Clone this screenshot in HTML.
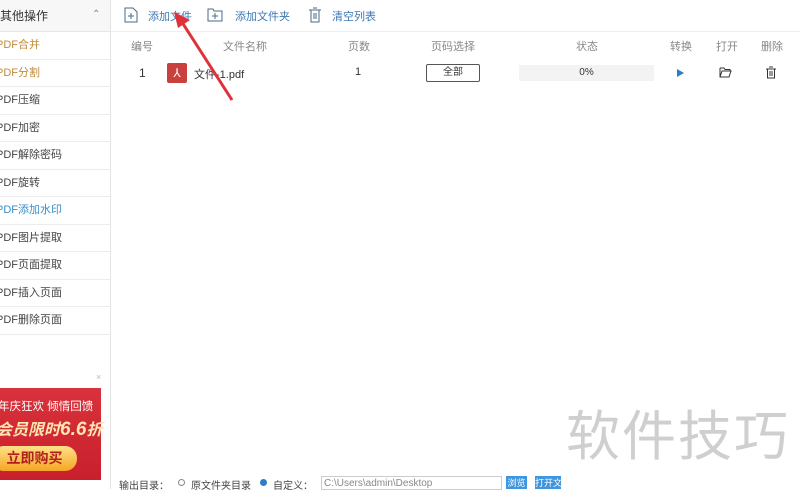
<!DOCTYPE html>
<html><head><meta charset="utf-8"><style>
*{margin:0;padding:0;box-sizing:border-box}
body{width:800px;height:489px;overflow:hidden;background:#fff;font-family:"Liberation Sans","Noto Sans CJK SC",sans-serif;font-size:11px;color:#333;position:relative}
.abs{position:absolute}
.side{left:0;top:0;width:111px;height:489px;border-right:1px solid #e4e4e4;background:#fff}
.sh{left:0;top:0;width:110px;height:32px;background:#f7f7f7;border-bottom:1px solid #e6e6e6;font-size:12px;line-height:32px;padding-left:0;color:#333}
.item{position:absolute;left:0;width:110px;height:27.5px;border-bottom:1px solid #ececec;line-height:27px;font-size:11px;color:#444;white-space:nowrap;overflow:hidden;text-indent:-4px}
.tb{top:0;left:111px;width:689px;height:32px;border-bottom:1px solid #eee}
.tbt{font-size:11px;color:#3a78b5;top:8px}
.hd{top:38px;font-size:11px;color:#888}
</style></head><body>
<div class="abs side"></div>
<div class="abs sh">其他操作<span style="position:absolute;left:92px;top:-1px;color:#888;font-size:10px">&#8963;</span></div>
<div class="item" style="top:32px;color:#c08a3a">PDF合并</div>
<div class="item" style="top:59.5px;color:#c08a3a">PDF分割</div>
<div class="item" style="top:87px">PDF压缩</div>
<div class="item" style="top:114.5px">PDF加密</div>
<div class="item" style="top:142px">PDF解除密码</div>
<div class="item" style="top:169.5px">PDF旋转</div>
<div class="item" style="top:197px;color:#3a8ec8">PDF添加水印</div>
<div class="item" style="top:224.5px">PDF图片提取</div>
<div class="item" style="top:252px">PDF页面提取</div>
<div class="item" style="top:279.5px">PDF插入页面</div>
<div class="item" style="top:307px">PDF删除页面</div>
<div class="abs" style="left:96px;top:372px;color:#bbb;font-size:9px">×</div>
<div class="abs" style="left:0;top:388px;width:101px;height:92px;background:linear-gradient(#d8323c,#c8202c)">
<div class="abs" style="left:-2px;top:10px;color:#fff;font-size:11.5px;white-space:nowrap">年庆狂欢 倾情回馈</div>
<div class="abs" style="left:-4px;top:28px;color:#ffe6b0;font-size:16px;font-weight:bold;font-style:italic;white-space:nowrap">会员限时<span style="font-size:19px">6.6</span>折</div>
<div class="abs" style="left:-8px;top:58px;width:85px;height:25px;border-radius:12px;background:linear-gradient(#ffe08a,#f5a623);color:#b0201c;font-weight:bold;font-size:14px;line-height:25px;text-align:center">立即购买</div>
</div>
<div class="abs tb"></div>
<svg class="abs" style="left:124px;top:7px" width="14" height="16"><path d="M1 1h8l4 4v10H1z" fill="none" stroke="#4a6a8a"/><path d="M4 9h6M7 6v6" stroke="#4a6a8a"/></svg>
<div class="abs tbt" style="left:148px">添加文件</div>
<svg class="abs" style="left:207px;top:8px" width="16" height="14"><path d="M1 1h5l1 2h8v10H1z" fill="none" stroke="#4a6a8a"/><path d="M5 8h6M8 5v6" stroke="#4a6a8a"/></svg>
<div class="abs tbt" style="left:235px">添加文件夹</div>
<svg class="abs" style="left:308px;top:7px" width="14" height="16"><path d="M1 3h12M5 1h4M3 3v12h8V3M6 6v6M8 6v6" fill="none" stroke="#4a6a8a"/></svg>
<div class="abs tbt" style="left:332px">清空列表</div>
<div class="abs hd" style="left:131px">编号</div>
<div class="abs hd" style="left:223px">文件名称</div>
<div class="abs hd" style="left:348px">页数</div>
<div class="abs hd" style="left:431px">页码选择</div>
<div class="abs hd" style="left:576px">状态</div>
<div class="abs hd" style="left:670px">转换</div>
<div class="abs hd" style="left:716px">打开</div>
<div class="abs hd" style="left:761px">删除</div>
<div class="abs" style="left:139px;top:66px;font-size:12px">1</div>
<div class="abs" style="left:167px;top:63px;width:20px;height:20px;background:#c9403c;border-radius:2px;color:#fff;text-align:center;line-height:20px;font-size:12px">⅄</div>
<div class="abs" style="left:194px;top:66px;font-size:11px">文件-1.pdf</div>
<div class="abs" style="left:355px;top:66px;font-size:11px">1</div>
<div class="abs" style="left:426px;top:64px;width:54px;height:18px;border:1px solid #555;border-radius:2px;text-align:center;line-height:16px;font-size:10px">全部</div>
<div class="abs" style="left:519px;top:65px;width:135px;height:16px;background:#f3f3f3;text-align:center;line-height:16px;font-size:10px">0%</div>
<div class="abs" style="left:677px;top:69px;width:0;height:0;border-left:7px solid #2a7fc8;border-top:4.5px solid transparent;border-bottom:4.5px solid transparent"></div>
<svg class="abs" style="left:719px;top:67px" width="13" height="11"><path d="M1 1h4l1 1.5h5V4M1 1v9h9l2-6H3L1 10" fill="none" stroke="#333"/></svg>
<svg class="abs" style="left:765px;top:66px" width="12" height="13"><path d="M1 3h10M4 1h4M2.5 3v9h7V3M5 5v5M7 5v5" fill="none" stroke="#333"/></svg>
<svg class="abs" style="left:170px;top:12px" width="70" height="90"><path d="M8 4L62 88" stroke="#e0303a" stroke-width="3"/><path d="M4 0L20 8L8 16z" fill="#e0303a"/></svg>
<div class="abs" style="left:119px;top:477px;font-size:10px;color:#444">输出目录：</div>
<div class="abs" style="left:178px;top:479px;width:7px;height:7px;border:1px solid #888;border-radius:50%"></div>
<div class="abs" style="left:191px;top:477px;font-size:10px;color:#444">原文件夹目录</div>
<div class="abs" style="left:260px;top:479px;width:7px;height:7px;border-radius:50%;background:#2a7fc8"></div>
<div class="abs" style="left:273px;top:477px;font-size:10px;color:#444">自定义：</div>
<div class="abs" style="left:321px;top:476px;width:181px;height:14px;border:1px solid #ccc;font-size:10px;color:#888;padding-left:2px;line-height:13px">C:\Users\admin\Desktop</div>
<div class="abs" style="left:506px;top:476px;width:21px;height:13px;background:#3f96e0;color:#fff;font-size:9px;text-align:center">浏览</div>
<div class="abs" style="left:535px;top:476px;width:26px;height:13px;background:#3f96e0;color:#fff;font-size:9px;overflow:hidden;white-space:nowrap">打开文</div>
<div class="abs" style="left:566px;top:392px;font-size:54px;color:#cfcfcf;letter-spacing:2px;white-space:nowrap">软件技巧</div>
</body></html>
